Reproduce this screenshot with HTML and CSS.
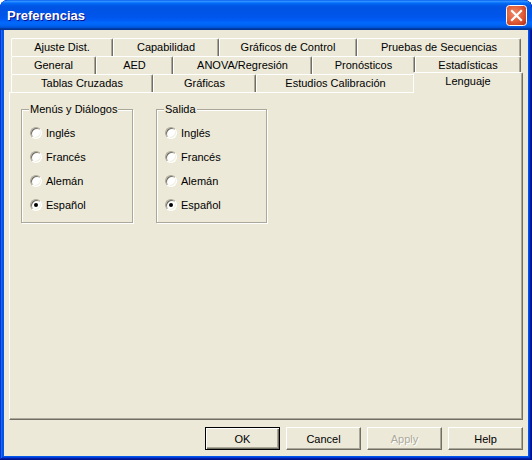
FILE: index.html
```html
<!DOCTYPE html>
<html lang="es">
<head>
<meta charset="utf-8">
<title>Preferencias</title>
<link rel="stylesheet" href="styles.css">
</head>
<body>
<div class="window">
  <div class="titlebar">
    <span class="title">Preferencias</span>
    <button class="close" aria-label="Cerrar">
      <svg width="21" height="21" viewBox="0 0 21 21">
        <defs>
          <radialGradient id="cg" cx="0.4" cy="0.4" r="0.75">
            <stop offset="0" stop-color="#F08A68"/>
            <stop offset="0.6" stop-color="#DE5A34"/>
            <stop offset="1" stop-color="#B8341A"/>
          </radialGradient>
        </defs>
        <rect x="0.5" y="0.5" width="20" height="20" rx="3" fill="url(#cg)" stroke="#fff"/>
        <path d="M6 6 L15 15 M15 6 L6 15" stroke="#fff" stroke-width="2.2" stroke-linecap="square"/>
      </svg>
    </button>
  </div>
  <div class="client">
    <div class="tabctl">
      <div class="tabrows">
        <div class="tabrow">
          <div class="tab t-ajuste">Ajuste Dist.</div>
          <div class="tab t-capab">Capabilidad</div>
          <div class="tab t-graf-ctrl">Gráficos de Control</div>
          <div class="tab t-pruebas">Pruebas de Secuencias</div>
        </div>
        <div class="tabrow">
          <div class="tab t-general">General</div>
          <div class="tab t-aed">AED</div>
          <div class="tab t-anova">ANOVA/Regresión</div>
          <div class="tab t-pron">Pronósticos</div>
          <div class="tab t-estad">Estadísticas</div>
        </div>
        <div class="tabrow">
          <div class="tab t-tablas">Tablas Cruzadas</div>
          <div class="tab t-graficas">Gráficas</div>
          <div class="tab t-estudios">Estudios Calibración</div>
          <div class="tab t-lenguaje sel">Lenguaje</div>
        </div>
      </div>
      <div class="panel">
        <div class="group g1">
          <div class="caption">Menús y Diálogos</div>
          <div class="radio"><span class="circle"></span>Inglés</div>
          <div class="radio"><span class="circle"></span>Francés</div>
          <div class="radio"><span class="circle"></span>Alemán</div>
          <div class="radio"><span class="circle on"></span>Español</div>
        </div>
        <div class="group g2">
          <div class="caption">Salida</div>
          <div class="radio"><span class="circle"></span>Inglés</div>
          <div class="radio"><span class="circle"></span>Francés</div>
          <div class="radio"><span class="circle"></span>Alemán</div>
          <div class="radio"><span class="circle on"></span>Español</div>
        </div>
      </div>
    </div>
    <div class="buttons">
      <button class="btn default">OK</button>
      <button class="btn">Cancel</button>
      <button class="btn disabled">Apply</button>
      <button class="btn">Help</button>
    </div>
  </div>
</div>
</body>
</html>
```

FILE: styles.css
```css
* { box-sizing: border-box; }

body {
  margin: 0;
  background: #ffffff;
  font-family: "Liberation Sans", Arial, sans-serif;
  font-size: 11px;
  color: #000;
}

.window {
  width: 532px;
  height: 460px;
  display: flex;
  flex-direction: column;
  background: #0055EA;
  border-radius: 8px 8px 0 0;
  overflow: hidden;
  padding-bottom: 4px;
  box-shadow: inset -1px -1px #00138c, inset 1px 1px #0831d9,
              inset -2px -2px #001ea0, inset 2px 2px #166aee,
              inset -3px -3px #003bda, inset 3px 3px #0855dd;
}

.titlebar {
  height: 30px;
  flex: none;
  display: flex;
  align-items: center;
  padding: 0 5px 0 7px;
  border-radius: 8px 8px 0 0;
  background: linear-gradient(to bottom,
    #0058ee 0%, #3593ff 4%, #288eff 6%, #127dff 8%, #036ffc 10%,
    #0262ee 14%, #0057e5 20%, #0054e3 24%, #0055eb 56%, #005bf5 66%,
    #026afe 76%, #0062ef 86%, #0052d6 92%, #0040ab 94%, #003092 100%);
}

.title {
  flex: 1;
  color: #fff;
  font-family: "Liberation Sans", Arial, sans-serif;
  font-weight: bold;
  font-size: 13px;
  text-shadow: 1px 1px #0f1089;
  padding-top: 1px;
}

.close {
  width: 21px;
  height: 21px;
  padding: 0;
  border: 0;
  background: none;
  display: block;
}
.close svg { display: block; }

.client {
  flex: 1;
  margin: 0 4px;
  background: #ECE9D8;
  padding: 8px 5px 6px;
  display: flex;
  flex-direction: column;
}

.tabctl {
  height: 382px;
  display: flex;
  flex-direction: column;
}

.tabrows {
  padding: 0 2px;
  display: flex;
  flex-direction: column;
}

.tabrow {
  display: flex;
  height: 18px;
}

.tab {
  flex: none;
  text-align: center;
  white-space: nowrap;
  line-height: 17px;
  background: #ECE9D8;
  border-top: 1px solid #fff;
  border-left: 1px solid #fff;
  border-right: 1px solid #716F64;
  box-shadow: inset -1px 0 #ACA899;
  border-radius: 2px 2px 0 0;
}

/* row 1 */
.t-ajuste { width: 102px; }
.t-capab { width: 106px; }
.t-graf-ctrl { width: 138px; }
.t-pruebas { width: 164px; }
/* row 2 */
.t-general { width: 85px; }
.t-aed { width: 77px; }
.t-anova { width: 139px; }
.t-pron { width: 103px; }
.t-estad { width: 106px; }
/* row 3 */
.t-tablas { width: 142px; }
.t-graficas { width: 103px; }
.t-estudios { width: 159px; }
.t-lenguaje { width: 106px; }

.tab.sel {
  width: 110px;
  margin: -2px -2px -1px;
  position: relative;
  z-index: 1;
  line-height: 16px;
}

.panel {
  flex: 1;
  border: 1px solid;
  border-color: #fff #716F64 #716F64 #fff;
  box-shadow: inset -1px -1px #ACA899;
  padding: 16px 11px;
  display: flex;
  align-items: flex-start;
  gap: 23px;
}

.group {
  border: 1px solid #ACA899;
  box-shadow: inset 1px 1px #fff, 1px 1px #fff;
  padding: 0 8px 5px;
  display: flex;
  flex-direction: column;
}
.g1 { width: 112px; }
.g2 { width: 111px; }

.caption {
  align-self: flex-start;
  margin: -7px 0 5px -1px;
  padding: 0 1px;
  line-height: 13px;
  background: #ECE9D8;
}

.radio {
  height: 24px;
  display: flex;
  align-items: center;
  gap: 4px;
}

.circle {
  width: 12px;
  height: 12px;
  flex: none;
  border-radius: 50%;
  background: #fff;
  border: 1px solid;
  border-color: #ACA899 #fff #fff #ACA899;
  box-shadow: inset 1px 1px #716F64, inset -1px -1px #F1EFE2;
  display: flex;
  align-items: center;
  justify-content: center;
}
.circle.on::after {
  content: "";
  width: 4px;
  height: 4px;
  border-radius: 50%;
  background: #000;
}

.buttons {
  display: flex;
  justify-content: flex-end;
  gap: 6px;
  margin-top: 7px;
}

.btn {
  width: 75px;
  height: 23px;
  padding: 0;
  font-family: "Liberation Sans", Arial, sans-serif;
  font-size: 11px;
  color: #000;
  background: #ECE9D8;
  border: 1px solid;
  border-color: #fff #716F64 #716F64 #fff;
  box-shadow: inset -1px -1px #ACA899;
}
.btn.default {
  border: 1px solid #000;
  box-shadow: inset 1px 1px #fff, inset -1px -1px #716F64, inset -2px -2px #ACA899;
}
.btn.disabled {
  color: #ACA899;
  text-shadow: 1px 1px #fff;
}
```
